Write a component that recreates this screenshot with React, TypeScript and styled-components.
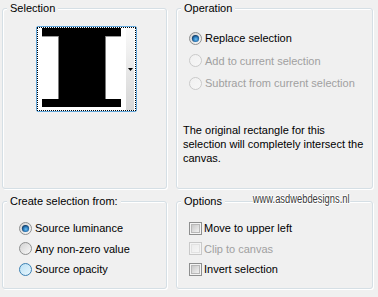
import React, { useId } from "react";
import styled, { createGlobalStyle } from "styled-components";

const Global = createGlobalStyle`
  html, body { margin: 0; padding: 0; background: #f0f0f0; }
  body { font-family: "Liberation Sans", Arial, sans-serif; font-size: 11px; color: #000; }
`;

const Page = styled.div`
  position: relative;
  width: 378px;
  height: 297px;
  box-sizing: border-box;
  padding: 8px 0 0 2px;
  display: grid;
  grid-template-columns: 165px 197px;
  grid-template-rows: 181px 88px;
  column-gap: 9px;
  row-gap: 12px;
  background: #f0f0f0;
`;

const Group = styled.div`
  position: relative;
  box-sizing: border-box;
  border: 1px solid #d5dfe5;
  border-radius: 3px;
  box-shadow: inset 1px 1px 0 #fff, 1px 1px 0 #fff;
  display: flex;
  flex-direction: column;
`;

const Legend = styled.div`
  position: absolute;
  top: -8px;
  left: 4px;
  padding: 0 3px;
  background: #f0f0f0;
  line-height: 14px;
  white-space: nowrap;
`;

const PreviewArea = styled.div`
  padding: 17px 0 0 33px;
`;

const PreviewFrame = styled.div`
  width: 101px;
  height: 86px;
  box-sizing: border-box;
  border: 1px solid #62a7dc;
  border-radius: 2px;
  background: #fff;
  display: flex;
`;

const FocusRect = styled.div`
  flex: 1;
  border: 1px dotted #000;
  display: flex;
`;

const Strip = styled.div`
  width: 8px;
  display: flex;
  align-items: center;
  justify-content: center;
  background: linear-gradient(#fafafa, #d6d6d6);
`;

const List = styled.div<{ $top: number; $left: number; $row: number }>`
  display: flex;
  flex-direction: column;
  padding: ${(p) => p.$top}px 0 0 ${(p) => p.$left}px;
  & > * { height: ${(p) => p.$row}px; }
`;

const Row = styled.div<{ $disabled?: boolean; $gap: number }>`
  display: flex;
  align-items: center;
  gap: ${(p) => p.$gap}px;
  color: ${(p) => (p.$disabled ? "#a0a0a0" : "#000")};
  white-space: nowrap;
  line-height: 14px;
  svg { flex: none; }
`;

const Description = styled.p`
  margin: 28px 0 0 6px;
  width: 184px;
  line-height: 14px;
`;

const Watermark = styled.div`
  position: absolute;
  left: 252px;
  top: 192px;
  font-family: "Liberation Sans", Arial, sans-serif;
  font-size: 12px;
  line-height: 14px;
  color: #3a3a3a;
  padding: 0 1px;
  transform: scaleX(0.78);
  transform-origin: left center;
  white-space: nowrap;
  text-shadow: 1px 0 0 #fff, -1px 0 0 #fff, 0 1px 0 #fff, 0 -1px 0 #fff, 1px 1px 1px #fff;
`;

type RadioKind = "checked" | "normal" | "hover" | "disabled";

function Radio({ kind }: { kind: RadioKind }) {
  const id = useId().replace(/:/g, "");
  const stroke =
    kind === "disabled" ? "#c9c9c9" : kind === "hover" ? "#3c7fb1" : "#8e8f8f";
  const c1 =
    kind === "disabled" ? "#f0f0f0" : kind === "hover" ? "#b9e0f5" : "#d0d0d0";
  const c2 =
    kind === "disabled" ? "#f7f7f7" : kind === "hover" ? "#eaf7fd" : "#fbfbfb";
  return (
    <svg width="13" height="13" viewBox="0 0 13 13">
      <defs>
        <linearGradient id={`f${id}`} x1="0" y1="0" x2="1" y2="1">
          <stop offset="0" stopColor={c1} />
          <stop offset="1" stopColor={c2} />
        </linearGradient>
        <radialGradient id={`d${id}`} cx="0.55" cy="0.6" r="0.6">
          <stop offset="0" stopColor="#6ec2f5" />
          <stop offset="0.55" stopColor="#2a78b8" />
          <stop offset="1" stopColor="#0c2f55" />
        </radialGradient>
      </defs>
      <circle cx="6.5" cy="6.5" r="6" fill={`url(#f${id})`} stroke={stroke} />
      {kind === "checked" && <circle cx="6.5" cy="6.5" r="3.6" fill={`url(#d${id})`} />}
    </svg>
  );
}

function Check({ disabled }: { disabled?: boolean }) {
  const id = useId().replace(/:/g, "");
  return (
    <svg width="13" height="13" viewBox="0 0 13 13">
      <defs>
        <linearGradient id={`c${id}`} x1="0" y1="0" x2="1" y2="1">
          <stop offset="0" stopColor={disabled ? "#ececec" : "#c6c6c6"} />
          <stop offset="1" stopColor={disabled ? "#f6f6f6" : "#f4f4f4"} />
        </linearGradient>
      </defs>
      <rect x="0.5" y="0.5" width="12" height="12" fill="#f4f4f4" stroke={disabled ? "#c9c9c9" : "#8e8f8f"} />
      <rect x="2.5" y="2.5" width="8" height="8" fill={`url(#c${id})`} stroke={disabled ? "#e2e2e2" : "#b8b8b8"} />
    </svg>
  );
}

function PreviewImage() {
  return (
    <svg width="88" height="80" viewBox="0 0 88 80">
      <rect width="88" height="80" fill="#fff" />
      <path d="M4 0H83V8H67V71H83V79H4V71H21V8H4Z" fill="#000" />
      <line x1="20.5" y1="8" x2="20.5" y2="71" stroke="#7a7a7a" />
      <line x1="67.5" y1="8" x2="67.5" y2="71" stroke="#7a7a7a" />
      <line x1="4" y1="8.5" x2="20" y2="8.5" stroke="#9a9a9a" />
      <line x1="68" y1="8.5" x2="83" y2="8.5" stroke="#9a9a9a" />
    </svg>
  );
}

export default function App() {
  return (
    <>
      <Global />
      <Page>
        <Group>
          <Legend>Selection</Legend>
          <PreviewArea>
            <PreviewFrame>
              <FocusRect>
                <PreviewImage />
                <Strip>
                  <svg width="5" height="3" viewBox="0 0 5 3">
                    <path d="M0 0H5L2.5 3Z" fill="#000" />
                  </svg>
                </Strip>
              </FocusRect>
            </PreviewFrame>
          </PreviewArea>
        </Group>

        <Group>
          <Legend>Operation</Legend>
          <List $top={18} $left={12} $row={22.5}>
            <Row $gap={3}>
              <Radio kind="checked" />
              Replace selection
            </Row>
            <Row $gap={3} $disabled>
              <Radio kind="disabled" />
              Add to current selection
            </Row>
            <Row $gap={3} $disabled>
              <Radio kind="disabled" />
              Subtract from current selection
            </Row>
          </List>
          <Description>
            The original rectangle for this selection will completely intersect the canvas.
          </Description>
        </Group>

        <Group>
          <Legend>Create selection from:</Legend>
          <List $top={16} $left={16} $row={20.5}>
            <Row $gap={3}>
              <Radio kind="checked" />
              Source luminance
            </Row>
            <Row $gap={3}>
              <Radio kind="normal" />
              Any non-zero value
            </Row>
            <Row $gap={3}>
              <Radio kind="hover" />
              Source opacity
            </Row>
          </List>
        </Group>

        <Group>
          <Legend>Options</Legend>
          <List $top={16} $left={12} $row={20.5}>
            <Row $gap={2}>
              <Check />
              Move to upper left
            </Row>
            <Row $gap={2} $disabled>
              <Check disabled />
              Clip to canvas
            </Row>
            <Row $gap={2}>
              <Check />
              Invert selection
            </Row>
          </List>
        </Group>

        <Watermark>www.asdwebdesigns.nl</Watermark>
      </Page>
    </>
  );
}
